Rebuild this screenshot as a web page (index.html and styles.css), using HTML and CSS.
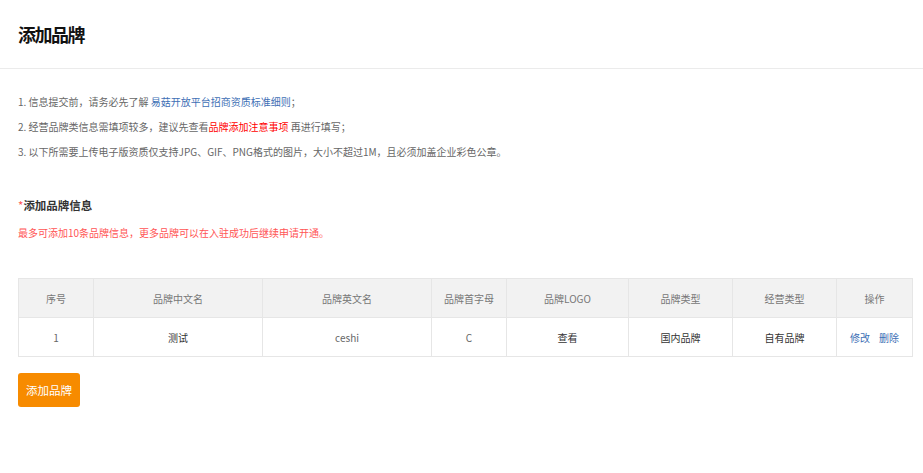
FILE: index.html
```html
<!DOCTYPE html>
<html lang="zh-CN">
<head>
  <meta charset="UTF-8">
  <title>添加品牌</title>
  <link rel="stylesheet" href="styles.css">
</head>
<body>
  <div class="page-head">添加品牌</div>

  <div class="page-body">
    <ul class="notice">
      <li>1. 信息提交前，请务必先了解 <a class="link-blue" href="#">易菇开放平台招商资质标准细则</a>；</li>
      <li>2. 经营品牌类信息需填项较多，建议先查看<a class="link-red" href="#">品牌添加注意事项</a> 再进行填写；</li>
      <li>3. 以下所需要上传电子版资质仅支持JPG、GIF、PNG格式的图片，大小不超过1M，且必须加盖企业彩色公章。</li>
    </ul>

    <div class="section-title"><span class="star">*</span>添加品牌信息</div>
    <div class="section-tip">最多可添加10条品牌信息，更多品牌可以在入驻成功后继续申请开通。</div>

    <table class="brand-table">
      <colgroup>
        <col style="width:75px">
        <col style="width:169px">
        <col style="width:169px">
        <col style="width:75px">
        <col style="width:122px">
        <col style="width:104px">
        <col style="width:104px">
        <col style="width:76px">
      </colgroup>
      <thead>
        <tr>
          <th>序号</th>
          <th>品牌中文名</th>
          <th>品牌英文名</th>
          <th>品牌首字母</th>
          <th>品牌LOGO</th>
          <th>品牌类型</th>
          <th>经营类型</th>
          <th>操作</th>
        </tr>
      </thead>
      <tbody>
        <tr>
          <td class="muted">1</td>
          <td>测试</td>
          <td class="muted">ceshi</td>
          <td class="muted">C</td>
          <td>查看</td>
          <td>国内品牌</td>
          <td>自有品牌</td>
          <td><a class="op" href="#">修改</a><a class="op" href="#">删除</a></td>
        </tr>
      </tbody>
    </table>

    <button class="btn-add" type="button">添加品牌</button>
  </div>
</body>
</html>
```

FILE: styles.css
```css
body {
  margin: 0;
  font-family: "Noto Sans CJK SC", "Noto Sans", sans-serif;
  font-size: 10px;
  color: #333;
  background: #fff;
}
a {
  text-decoration: none;
}
.page-head {
  height: 68px;
  line-height: 68px;
  padding: 0 18px;
  font-size: 18px;
  letter-spacing: -1.5px;
  font-weight: bold;
  color: #111;
  border-bottom: 1px solid #ebebeb;
}
.page-body {
  padding: 20px 11px 0 18px;
}
.notice {
  list-style: none;
  margin: 0;
  padding: 0;
  color: #666;
  line-height: 25px;
}
.link-blue { color: #3d6fb5; }
.link-red { color: #f00; }

.section-title {
  margin-top: 31px;
  line-height: 20px;
  font-size: 11.5px;
  font-weight: bold;
  color: #333;
}
.star {
  color: #f55;
  font-weight: normal;
}
.section-tip {
  margin-top: 8px;
  line-height: 20px;
  color: #f55;
}

.brand-table {
  margin-top: 35px;
  width: 894px;
  table-layout: fixed;
  border-collapse: collapse;
  text-align: center;
}
.brand-table th,
.brand-table td {
  height: 38px;
  padding: 0;
  border: 1px solid #e6e6e6;
  font-size: 10px;
}
.brand-table th {
  background: #f2f2f2;
  color: #777;
  font-weight: normal;
}
.brand-table td {
  color: #333;
}
.brand-table td.muted {
  color: #666;
}
.op {
  color: #3d6fb5;
  margin: 0 4.5px;
}
.btn-add {
  display: block;
  margin-top: 16px;
  width: 62px;
  height: 34px;
  padding: 0;
  border: none;
  border-radius: 3px;
  background: #f78b00;
  color: #fff;
  font-family: inherit;
  font-size: 11.5px;
  cursor: pointer;
}
```
